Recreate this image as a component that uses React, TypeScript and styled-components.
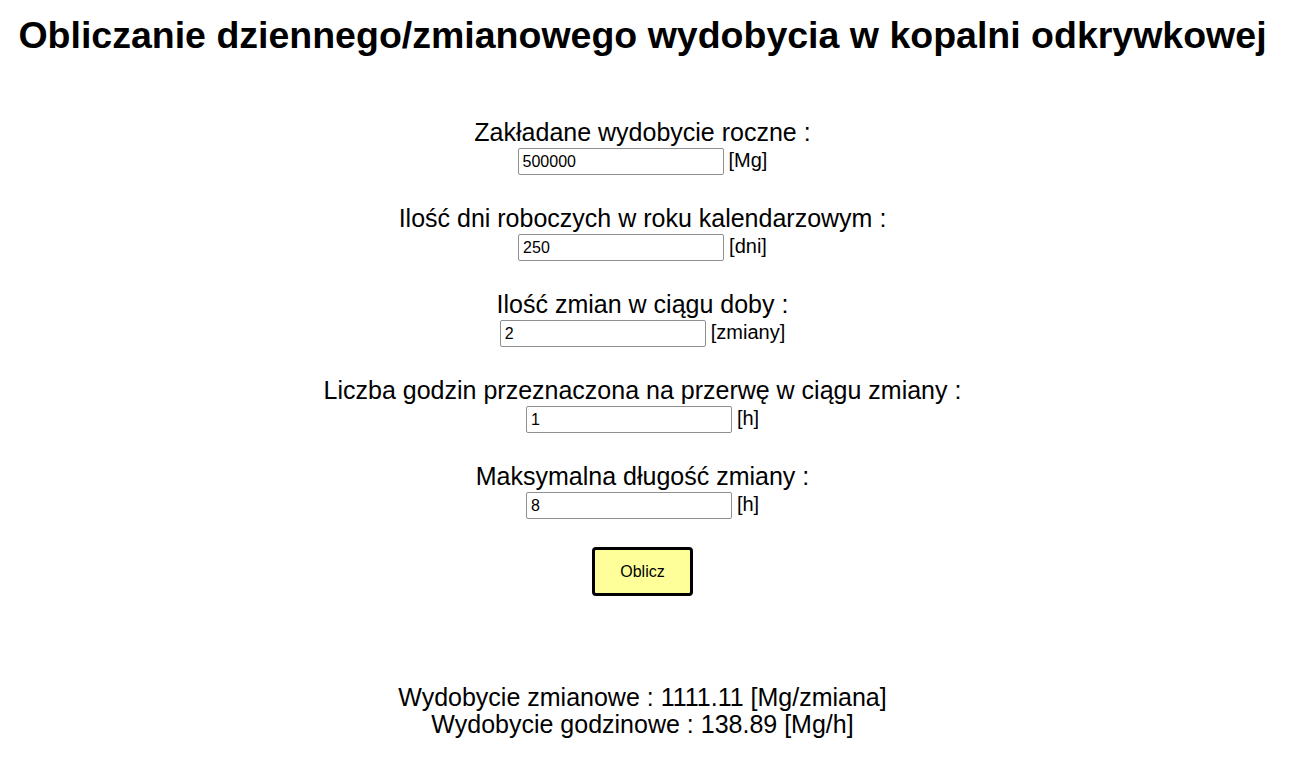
import React, { useState } from "react";
import styled, { createGlobalStyle } from "styled-components";

const GlobalStyle = createGlobalStyle`
  html, body {
    background: #ffffff;
  }
  body {
    margin: 8px;
    font-family: "Liberation Sans", Arial, sans-serif;
    color: #000000;
  }
`;

const Page = styled.div`
  display: flex;
  flex-direction: column;
  align-items: center;
  padding-right: 7px;
`;

const Title = styled.h1`
  margin: 6px 0 0;
  font-size: 37.5px;
  line-height: 42px;
  font-weight: bold;
  text-align: center;
  white-space: nowrap;
`;

const Form = styled.form`
  display: flex;
  flex-direction: column;
  align-items: center;
  gap: 29px;
  margin-top: 62px;
`;

const Field = styled.div`
  display: flex;
  flex-direction: column;
  align-items: center;
  gap: 2px;
`;

const Label = styled.label`
  font-size: 25px;
  line-height: 28px;
  white-space: nowrap;
`;

const InputRow = styled.div`
  display: flex;
  align-items: baseline;
  justify-content: center;
  gap: 5px;
  height: 27px;
`;

const Input = styled.input`
  box-sizing: border-box;
  width: 206px;
  height: 27px;
  padding: 0 4px;
  border: 1px solid #8f8f8f;
  border-radius: 2px;
  font-family: "Liberation Sans", Arial, sans-serif;
  font-size: 16px;
  color: #000000;
  background: #ffffff;
  outline: none;
`;

const Unit = styled.span`
  font-size: 20px;
  line-height: 1;
  white-space: nowrap;
`;

const Button = styled.button`
  box-sizing: border-box;
  width: 101px;
  height: 49px;
  margin-top: -1px;
  border: 3px solid #000000;
  border-radius: 4px;
  background: #ffff99;
  font-family: "Liberation Sans", Arial, sans-serif;
  font-size: 16px;
  color: #000000;
  cursor: pointer;
`;

const Results = styled.div`
  margin-top: 88px;
  display: flex;
  flex-direction: column;
  align-items: center;
`;

const ResultLine = styled.div`
  font-size: 25px;
  line-height: 27px;
  white-space: nowrap;
`;

type FieldDef = { key: string; label: string; unit: string; initial: string };

const fields: FieldDef[] = [
  { key: "annual", label: "Zakładane wydobycie roczne :", unit: "[Mg]", initial: "500000" },
  { key: "days", label: "Ilość dni roboczych w roku kalendarzowym :", unit: "[dni]", initial: "250" },
  { key: "shifts", label: "Ilość zmian w ciągu doby :", unit: "[zmiany]", initial: "2" },
  { key: "pause", label: "Liczba godzin przeznaczona na przerwę w ciągu zmiany :", unit: "[h]", initial: "1" },
  { key: "length", label: "Maksymalna długość zmiany :", unit: "[h]", initial: "8" },
];

export default function App() {
  const [values, setValues] = useState<Record<string, string>>(
    Object.fromEntries(fields.map((f) => [f.key, f.initial]))
  );
  const [result, setResult] = useState({ shift: "1111.11", hour: "138.89" });

  const calculate = (e: React.FormEvent) => {
    e.preventDefault();
    const annual = parseFloat(values.annual) || 0;
    const days = parseFloat(values.days) || 1;
    const shifts = parseFloat(values.shifts) || 1;
    const length = parseFloat(values.length) || 1;
    const shift = annual / (days * shifts * 0.9);
    const hour = shift / length;
    setResult({ shift: shift.toFixed(2), hour: hour.toFixed(2) });
  };

  return (
    <>
      <GlobalStyle />
      <Page>
        <Title>Obliczanie dziennego/zmianowego wydobycia w kopalni odkrywkowej</Title>
        <Form onSubmit={calculate}>
          {fields.map((f) => (
            <Field key={f.key}>
              <Label htmlFor={f.key}>{f.label}</Label>
              <InputRow>
                <Input
                  id={f.key}
                  type="text"
                  value={values[f.key]}
                  onChange={(e) => setValues({ ...values, [f.key]: e.target.value })}
                />
                <Unit>{f.unit}</Unit>
              </InputRow>
            </Field>
          ))}
          <Button type="submit">Oblicz</Button>
        </Form>
        <Results>
          <ResultLine>Wydobycie zmianowe : {result.shift} [Mg/zmiana]</ResultLine>
          <ResultLine>Wydobycie godzinowe : {result.hour} [Mg/h]</ResultLine>
        </Results>
      </Page>
    </>
  );
}
